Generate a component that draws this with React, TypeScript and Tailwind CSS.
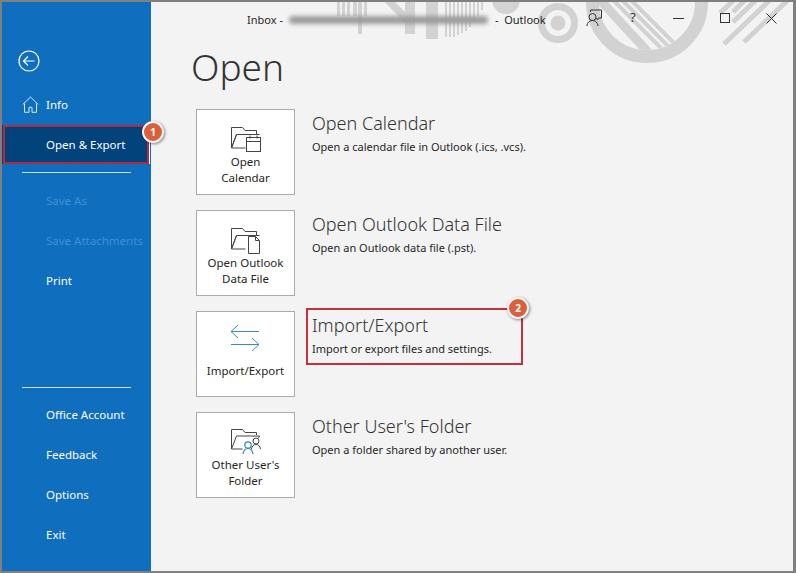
import React from "react";

const FolderBase = () => (
  <path d="M1.5 23V2.5h11l2.5 3h11.5V9M1.5 23 6.5 9.5h23M6.5 9.5 1.5 23h14" fill="none" stroke="#444" strokeWidth="1" />
);

const CalendarIcon = () => (
  <svg width="32" height="28" viewBox="0 0 32 28" className="block">
    <FolderBase />
    <rect x="16.5" y="12.5" width="14" height="14" fill="#fff" stroke="#444" />
    <path d="M16.5 16.5h14M20 10.5v3M27 10.5v3" stroke="#444" fill="none" />
  </svg>
);

const DataFileIcon = () => (
  <svg width="32" height="28" viewBox="0 0 32 28" className="block">
    <FolderBase />
    <path d="M18.5 10.5h7l4 4v13h-11z" fill="#fff" stroke="#444" />
    <path d="M25.5 10.5v4h4" fill="none" stroke="#444" />
  </svg>
);

const ArrowsIcon = () => (
  <svg width="30" height="28" viewBox="0 0 30 28" className="mt-[-6px] ml-[-2px] block">
    <path d="M1 7.5h28M8 1 1 7.5 8 14M1 20.5h28M22 14l7 6.5-7 6.5" fill="none" stroke="#3f8ab0" strokeWidth="1" />
  </svg>
);

const SharedIcon = () => (
  <svg width="32" height="28" viewBox="0 0 32 28" className="block">
    <path d="M1.5 21V1.5h11l2.5 3h11.5V7M1.5 21 6.5 8h23l-1 2M1.5 21h11" fill="none" stroke="#444" />
    <circle cx="26" cy="13" r="3" fill="none" stroke="#444" />
    <path d="M21.5 21c.5-3 2-4.500 4.500-4.500s4 1.500 4.500 4.500" fill="none" stroke="#444" />
    <circle cx="18" cy="17" r="3.200" fill="#ffffff" stroke="#2f86b5" strokeWidth="1.200" />
    <path d="M13 26c.5-3.500 2.300-5.500 5-5.500s4.500 2 5 5.500" fill="none" stroke="#2f86b5" strokeWidth="1.200" />
  </svg>
);

const Decoration = () => (
  <svg width="645" height="70" viewBox="151 0 645 70" className="absolute left-0 top-[-2px]" aria-hidden="true">
    <defs>
      <clipPath id="ringInner"><circle cx="647" cy="2" r="48" /></clipPath>
    </defs>
    <g fill="#d2d2d2">
      <rect x="337" y="0" width="3" height="16" />
      <rect x="342" y="0" width="3" height="16" />
      <rect x="347" y="0" width="3" height="16" />
      <rect x="353" y="0" width="4" height="16" />
      <rect x="358" y="0" width="4" height="34" />
      <rect x="364" y="0" width="3" height="16" />
      <path d="M383 0h10l22 22v12z" />
      <rect x="405" y="0" width="10" height="34" />
      <rect x="426" y="0" width="12" height="39" />
      <rect x="445" y="0" width="2" height="37" />
      <rect x="449" y="0" width="2" height="37" />
      <rect x="453" y="0" width="2" height="37" />
      <rect x="457" y="0" width="2" height="35" />
      <rect x="461" y="0" width="2" height="33" />
      <rect x="465" y="0" width="2" height="31" />
      <rect x="469" y="0" width="2" height="27" />
      <rect x="473" y="0" width="2" height="22" />
      <rect x="477" y="0" width="2" height="16" />
      <rect x="481" y="0" width="2" height="10" />
      <path d="M492 0h28a14 14 0 0 1-28 0z" />
    </g>
    <circle cx="558" cy="23" r="16.500" fill="none" stroke="#d2d2d2" strokeWidth="7" />
    <circle cx="558" cy="23" r="7.500" fill="#d2d2d2" />
    <circle cx="647" cy="2" r="54.500" fill="none" stroke="#d2d2d2" strokeWidth="13" />
    <g clipPath="url(#ringInner)" stroke="#d2d2d2" strokeWidth="4" fill="none">
      <path d="M600 0 L648 52" strokeWidth="9" />
      <path d="M613 0 L665 52" />
      <path d="M622 0 L674 52" />
      <path d="M631 0 L683 52" />
    </g>
    <g stroke="#d2d2d2" strokeWidth="5" fill="none">
      <path d="M788 0 744 42" />
      <path d="M770 0 724 44" />
      <path d="M745 0 733 12" />
      <path d="M756 0 733 22" />
      <path d="M734 0 720 13" />
    </g>
  </svg>
);

const navTop = ["Save As", "Save Attachments"];
const navBottom = ["Office Account", "Feedback", "Options", "Exit"];

function NavRow({ label, muted }: { label: string; muted?: boolean }) {
  return (
    <div className={`flex h-10 items-center pl-11 text-[11.500px] ${muted ? "text-[#3f8fd2]" : "text-white"}`}>{label}</div>
  );
}

function Option({
  icon,
  label,
  title,
  desc,
}: {
  icon: React.ReactNode;
  label: React.ReactNode;
  title: string;
  desc: string;
}) {
  return (
    <div className="flex h-[86px]">
      <div className="flex h-[86px] w-[99px] flex-col items-center border border-[#ababab] bg-white pt-[15px]">
        <div className="flex h-[28px] items-center">{icon}</div>
        <div className="mt-[1px] text-center text-[11.500px] leading-[16px] text-[#262626]">{label}</div>
      </div>
      <div className="ml-[17px] pt-[1px]">
        <div className="text-[18px] leading-[26px] font-light text-[#333]">{title}</div>
        <div className="mt-[3px] text-[11px] leading-[16px] text-[#262626]">{desc}</div>
      </div>
    </div>
  );
}

function Badge({ n, className }: { n: number; className: string }) {
  return (
    <div
      className={`absolute flex h-[22px] w-[22px] items-center justify-center rounded-full border-2 border-[#f3f3f3] bg-[#d9603b] text-[10px] font-bold text-white shadow-[1px_1px_3px_rgba(0,0,0,0.45)] ${className}`}
    >
      {n}
    </div>
  );
}

export default function App() {
  return (
    <div className="relative h-[573px] w-[796px] overflow-hidden border-2 border-r-[3px] border-[#808080] bg-[#f3f3f3] font-['Noto_Sans','Open_Sans',sans-serif]">
      <div className="flex h-full">
        <aside className="flex h-full w-[149px] shrink-0 flex-col bg-[#106ebe] pt-[40px]">
          <div className="flex h-[38px] items-center pl-[16px]">
            <svg width="22" height="22" viewBox="0 0 22 22" fill="none" stroke="#fff" strokeWidth="1.200">
              <circle cx="11" cy="11" r="10" />
              <path d="M5.500 11h11M10 6.500 5.500 11l4.500 4.500" />
            </svg>
          </div>
          <div className="relative mt-[5px] flex h-10 items-center pl-11 text-[11.500px] text-white">
            <svg width="17" height="17" viewBox="0 0 17 17" fill="none" stroke="#dbe9f6" strokeWidth="1" className="absolute left-[20px] top-[11px]">
              <path d="M.8 8.500 8.500 1l7.700 7.500M2.500 7.500v8.800h4.500v-5h3v5h4.500V7.500" />
            </svg>
            Info
          </div>
          <div className="flex h-[39px] w-[148px] items-center border-r border-white bg-[#03437c] pl-11 text-[11.500px] text-white">Open &amp; Export</div>
          <div className="mx-5 mt-[8px] mb-[8px] h-px w-[109px] bg-[#cfe2f3]" />
          {navTop.map((l) => (
            <NavRow key={l} label={l} muted />
          ))}
          <NavRow label="Print" />
          <div className="mx-5 mt-[86px] mb-[7px] h-px w-[109px] bg-[#cfe2f3]" />
          {navBottom.map((l) => (
            <NavRow key={l} label={l} />
          ))}
        </aside>

        <main className="relative flex-1">
          <Decoration />
          <div className="relative z-10 flex h-[36px] items-center pl-[96px] text-[11px] text-[#262626]">
            <span>Inbox -</span>
            <span className="ml-[6px] h-[8px] w-[199px] rounded-full bg-[#9b9b9b] blur-[2px]" />
            <span className="ml-[7px]">-&nbsp; Outlook</span>
          </div>
          <h1 className="relative z-10 mt-[-1px] pl-[40px] text-[37px] leading-[60px] font-light text-[#333]">Open</h1>
          <div className="relative z-10 mt-[12px] flex flex-col gap-[15px] pl-[45px]">
            <Option icon={<CalendarIcon />} label={<>Open<br />Calendar</>} title="Open Calendar" desc="Open a calendar file in Outlook (.ics, .vcs)." />
            <Option icon={<DataFileIcon />} label={<>Open Outlook<br />Data File</>} title="Open Outlook Data File" desc="Open an Outlook data file (.pst)." />
            <Option icon={<ArrowsIcon />} label={<span className="mt-[7px] block">Import/Export</span>} title="Import/Export" desc="Import or export files and settings." />
            <Option icon={<SharedIcon />} label={<>Other User's<br />Folder</>} title="Other User's Folder" desc="Open a folder shared by another user." />
          </div>
        </main>
      </div>

      {/* Window controls */}
      <div className="absolute left-[584px] top-[6px] z-20 flex h-[20px] items-center text-[#333]">
        <svg width="18" height="18" viewBox="0 0 18 18" fill="none" stroke="#333" strokeWidth="1">
          <path d="M4.500 3V1h11v8h-3l-1 2-1-2" />
          <circle cx="6.500" cy="8" r="3.500" fill="none" />
          <path d="M.8 17c.5-3.500 2.700-5.500 5.700-5.500s5 2 5.700 5.500" />
        </svg>
        <span className="ml-[26px] w-[7px] text-[13px]">?</span>
        <div className="ml-[36px] h-px w-[11px] bg-[#333]" />
        <div className="ml-[36px] h-[10px] w-[10px] border border-[#333]" />
        <svg width="11" height="11" viewBox="0 0 11 11" className="ml-[36px]" stroke="#333" strokeWidth="1" fill="none">
          <path d="M.5.5l10 10M10.500.5l-10 10" />
        </svg>
      </div>

      {/* Annotations */}
      <div className="absolute left-[1px] top-[123px] z-20 h-[39px] w-[146px] border-2 border-[#b5293f]" />
      <Badge n={1} className="left-[140px] top-[119px] z-20" />
      <div className="absolute left-[304px] top-[306px] z-20 h-[57px] w-[217px] border-2 border-[#c4303c]" />
      <Badge n={2} className="left-[505px] top-[295px] z-20" />
    </div>
  );
}
